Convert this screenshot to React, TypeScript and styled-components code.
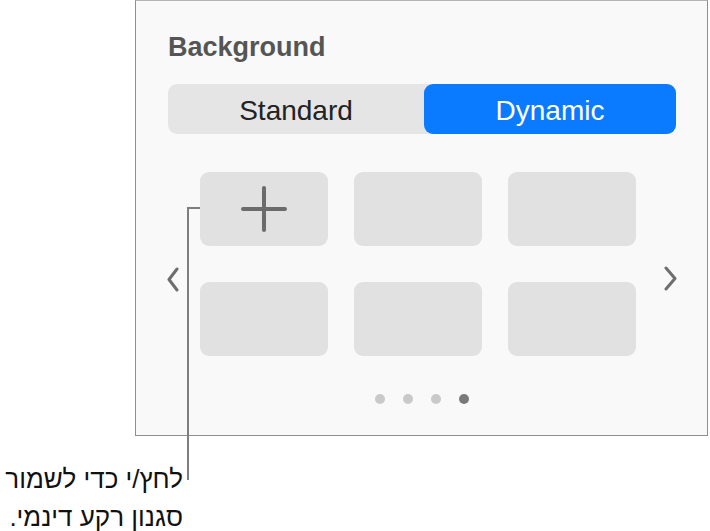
import React from "react";
import styled, { createGlobalStyle } from "styled-components";

const Global = createGlobalStyle`
  html, body { margin: 0; padding: 0; background: #ffffff; }
  body { font-family: "Liberation Sans", Arial, sans-serif; }
`;

const Stage = styled.div`
  position: relative;
  width: 710px;
  height: 531px;
  overflow: hidden;
`;

const Panel = styled.section`
  box-sizing: border-box;
  margin-left: 135px;
  width: 573px;
  height: 436px;
  background: #f9f9f9;
  border: 1px solid #8e8e8e;
  border-top-color: #b4b4b4;
  padding: 30px 31px 0 32px;
  display: flex;
  flex-direction: column;
`;

const Heading = styled.h2`
  margin: 0;
  font-size: 27px;
  line-height: 32px;
  font-weight: 700;
  color: #555555;
`;

const Segmented = styled.div`
  margin-top: 21px;
  height: 50px;
  border-radius: 9px;
  background: #e5e5e5;
  display: grid;
  grid-template-columns: 256px 1fr;
`;

const Segment = styled.div<{ $active?: boolean }>`
  box-sizing: border-box;
  padding-top: 4px;
  display: flex;
  align-items: center;
  justify-content: center;
  border-radius: 9px;
  font-size: 28px;
  color: ${(p) => (p.$active ? "#ffffff" : "#222222")};
  background: ${(p) => (p.$active ? "#0a7bff" : "transparent")};
`;

const Carousel = styled.div`
  margin-top: 38px;
  display: flex;
  align-items: flex-start;
`;

const Chevron = styled.svg<{ $side: "left" | "right" }>`
  flex: none;
  margin-top: ${(p) => (p.$side === "left" ? "95px" : "94px")};
  margin-left: ${(p) => (p.$side === "left" ? "-2px" : "27px")};
  margin-right: ${(p) => (p.$side === "left" ? "20px" : "0")};
`;

const Grid = styled.div`
  display: grid;
  grid-template-columns: repeat(3, 128px);
  grid-auto-rows: 74px;
  column-gap: 26px;
  row-gap: 36px;
`;

const Tile = styled.div`
  border-radius: 9px;
  background: #e1e1e1;
  display: flex;
  align-items: center;
  justify-content: center;
`;

const Dots = styled.div`
  margin-top: 38px;
  display: flex;
  justify-content: center;
  gap: 18px;
`;

const Dot = styled.span<{ $active?: boolean }>`
  width: 10px;
  height: 10px;
  border-radius: 50%;
  background: ${(p) => (p.$active ? "#7a7a7a" : "#c9c9c9")};
`;

const Caption = styled.p`
  margin: 24px 0 0 0;
  width: 183px;
  direction: rtl;
  text-align: right;
  font-family: "Liberation Sans", "DejaVu Sans", sans-serif;
  font-size: 26px;
  line-height: 38px;
  color: #111111;
`;

const LeaderLine = styled.div<{ $dir: "v" | "h" }>`
  position: absolute;
  left: 187px;
  top: 207px;
  background: #7f7f7f;
  width: ${(p) => (p.$dir === "v" ? "2px" : "13px")};
  height: ${(p) => (p.$dir === "v" ? "273px" : "2px")};
`;

const PlusIcon = () => (
  <svg width="46" height="46" viewBox="0 0 46 46">
    <path d="M23 2 V44 M2 23 H44" stroke="#6b6b6b" strokeWidth="4" strokeLinecap="round" fill="none" />
  </svg>
);

export default function App() {
  return (
    <Stage>
      <Global />
      <Panel>
        <Heading>Background</Heading>
        <Segmented>
          <Segment>Standard</Segment>
          <Segment $active>Dynamic</Segment>
        </Segmented>
        <Carousel>
          <Chevron $side="left" width="14" height="26" viewBox="0 0 14 26">
            <polyline points="11,2 3,12.5 11,23" fill="none" stroke="#6e6e6e" strokeWidth="3" strokeLinecap="round" strokeLinejoin="round" />
          </Chevron>
          <Grid>
            <Tile>
              <PlusIcon />
            </Tile>
            <Tile />
            <Tile />
            <Tile />
            <Tile />
            <Tile />
          </Grid>
          <Chevron $side="right" width="16" height="26" viewBox="0 0 16 26">
            <polyline points="3,2 12,12.5 3,23" fill="none" stroke="#6e6e6e" strokeWidth="3" strokeLinecap="round" strokeLinejoin="round" />
          </Chevron>
        </Carousel>
        <Dots>
          <Dot />
          <Dot />
          <Dot />
          <Dot $active />
        </Dots>
      </Panel>
      <Caption>
        לחץ/י כדי לשמור
        <br />
        סגנון רקע דינמי.
      </Caption>
      <LeaderLine $dir="v" />
      <LeaderLine $dir="h" />
    </Stage>
  );
}
